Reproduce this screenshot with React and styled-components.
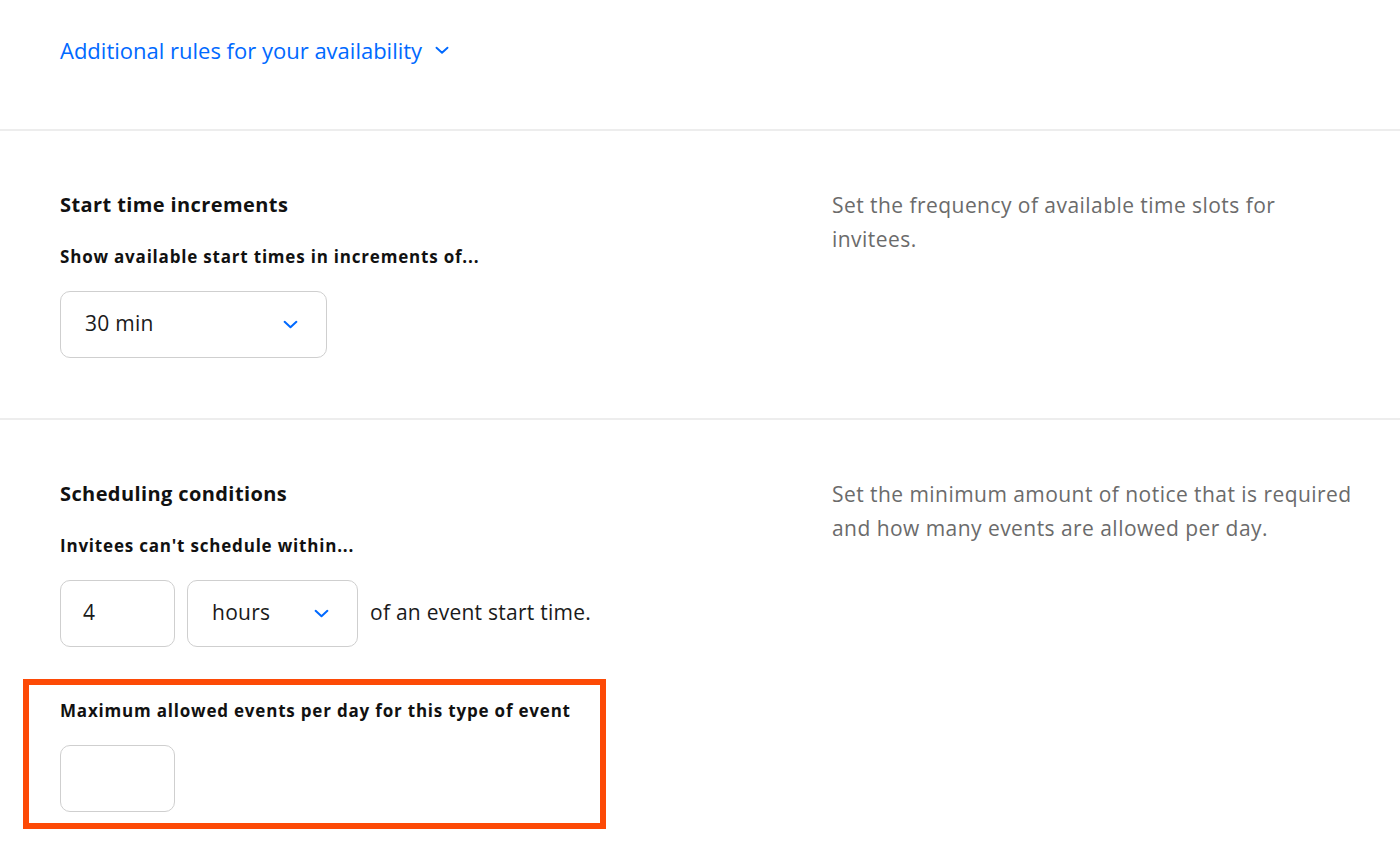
import React from "react";
import styled, { createGlobalStyle } from "styled-components";

const Global = createGlobalStyle`
  html, body { margin: 0; padding: 0; background: #fff; }
  body { font-family: "Open Sans", "Noto Sans", sans-serif; color: #1a1a1a; }
  * { box-sizing: border-box; }
`;

const Page = styled.div`
  width: 1400px;
  min-height: 854px;
  background: #fff;
  overflow: hidden;
`;

const TopSection = styled.div`
  padding: 35px 60px 0;
  height: 131px;
  border-bottom: 2px solid #ededed;
`;

const LinkButton = styled.button`
  display: inline-flex;
  align-items: center;
  gap: 13px;
  background: none;
  border: none;
  padding: 0;
  font-family: inherit;
  font-size: 22px;
  color: #0069ff;
  cursor: pointer;
`;

const Section = styled.section`
  display: grid;
  grid-template-columns: 832px 530px;
  padding: ${(p) => p.$pad};
  border-bottom: ${(p) => (p.$divider ? "2px solid #ededed" : "none")};
`;

const Left = styled.div`
  display: flex;
  flex-direction: column;
  padding-left: 60px;
`;

const Title = styled.h2`
  margin: 0 0 29px;
  font-size: 20px;
  font-weight: 700;
  line-height: 24px;
  letter-spacing: 0.4px;
  color: #111;
`;

const Label = styled.div`
  font-size: 17px;
  font-weight: 700;
  line-height: 22px;
  letter-spacing: 0.8px;
  color: #111;
  margin-bottom: 23px;
`;

const Desc = styled.p`
  margin: -5px 0 0;
  font-size: 21px;
  line-height: 34px;
  letter-spacing: 0.45px;
  color: #6b6b6b;
`;

const Row = styled.div`
  display: flex;
  align-items: center;
  gap: 12px;
`;

const Box = styled.div`
  width: ${(p) => p.$w}px;
  height: 67px;
  border: 1.5px solid #cfcfcf;
  border-radius: 10px;
  display: flex;
  align-items: center;
  justify-content: space-between;
  padding: 0 ${(p) => p.$pr || 24}px 0 ${(p) => p.$pl || 24}px;
  font-size: 21px;
  letter-spacing: 0.25px;
  color: #1a1a1a;
  background: #fff;
`;

const BoxText = styled.span`
  margin-bottom: 4px;
`;

const Trailing = styled.span`
  font-size: 21px;
  letter-spacing: 0.25px;
  color: #1a1a1a;
  margin-bottom: 4px;
`;

const Highlight = styled.div`
  margin: 32px 0 0 -37px;
  width: 583px;
  border: 6px solid #fd4a06;
  padding: 15px 0 11px 31px;
`;

const Chevron = ({ size = 14 }) => (
  <svg width={size} height={size * 0.6} viewBox="0 0 14 8" fill="none">
    <path d="M1.5 1.5L7 6.5L12.5 1.5" stroke="#0069ff" strokeWidth="1.9" strokeLinecap="round" strokeLinejoin="round" />
  </svg>
);

export default function App() {
  return (
    <Page>
      <Global />
      <TopSection>
        <LinkButton>
          Additional rules for your availability <Chevron size={14} />
        </LinkButton>
      </TopSection>

      <Section $pad="62px 0 60px" $divider>
        <Left>
          <Title>Start time increments</Title>
          <Label>Show available start times in increments of...</Label>
          <Row>
            <Box $w={267} $pr={28}>
              <BoxText>30 min</BoxText>
              <Chevron size={15} />
            </Box>
          </Row>
        </Left>
        <Desc>Set the frequency of available time slots for invitees.</Desc>
      </Section>

      <Section $pad="62px 0 24px">
        <Left>
          <Title>Scheduling conditions</Title>
          <Label>Invitees can't schedule within...</Label>
          <Row>
            <Box $w={115} $pl={22}>
              <BoxText>4</BoxText>
            </Box>
            <Box $w={171} $pr={28}>
              <BoxText>hours</BoxText>
              <Chevron size={15} />
            </Box>
            <Trailing>of an event start time.</Trailing>
          </Row>
          <Highlight>
            <Label>Maximum allowed events per day for this type of event</Label>
            <Box $w={115} />
          </Highlight>
        </Left>
        <Desc>Set the minimum amount of notice that is required and how many events are allowed per day.</Desc>
      </Section>
    </Page>
  );
}
